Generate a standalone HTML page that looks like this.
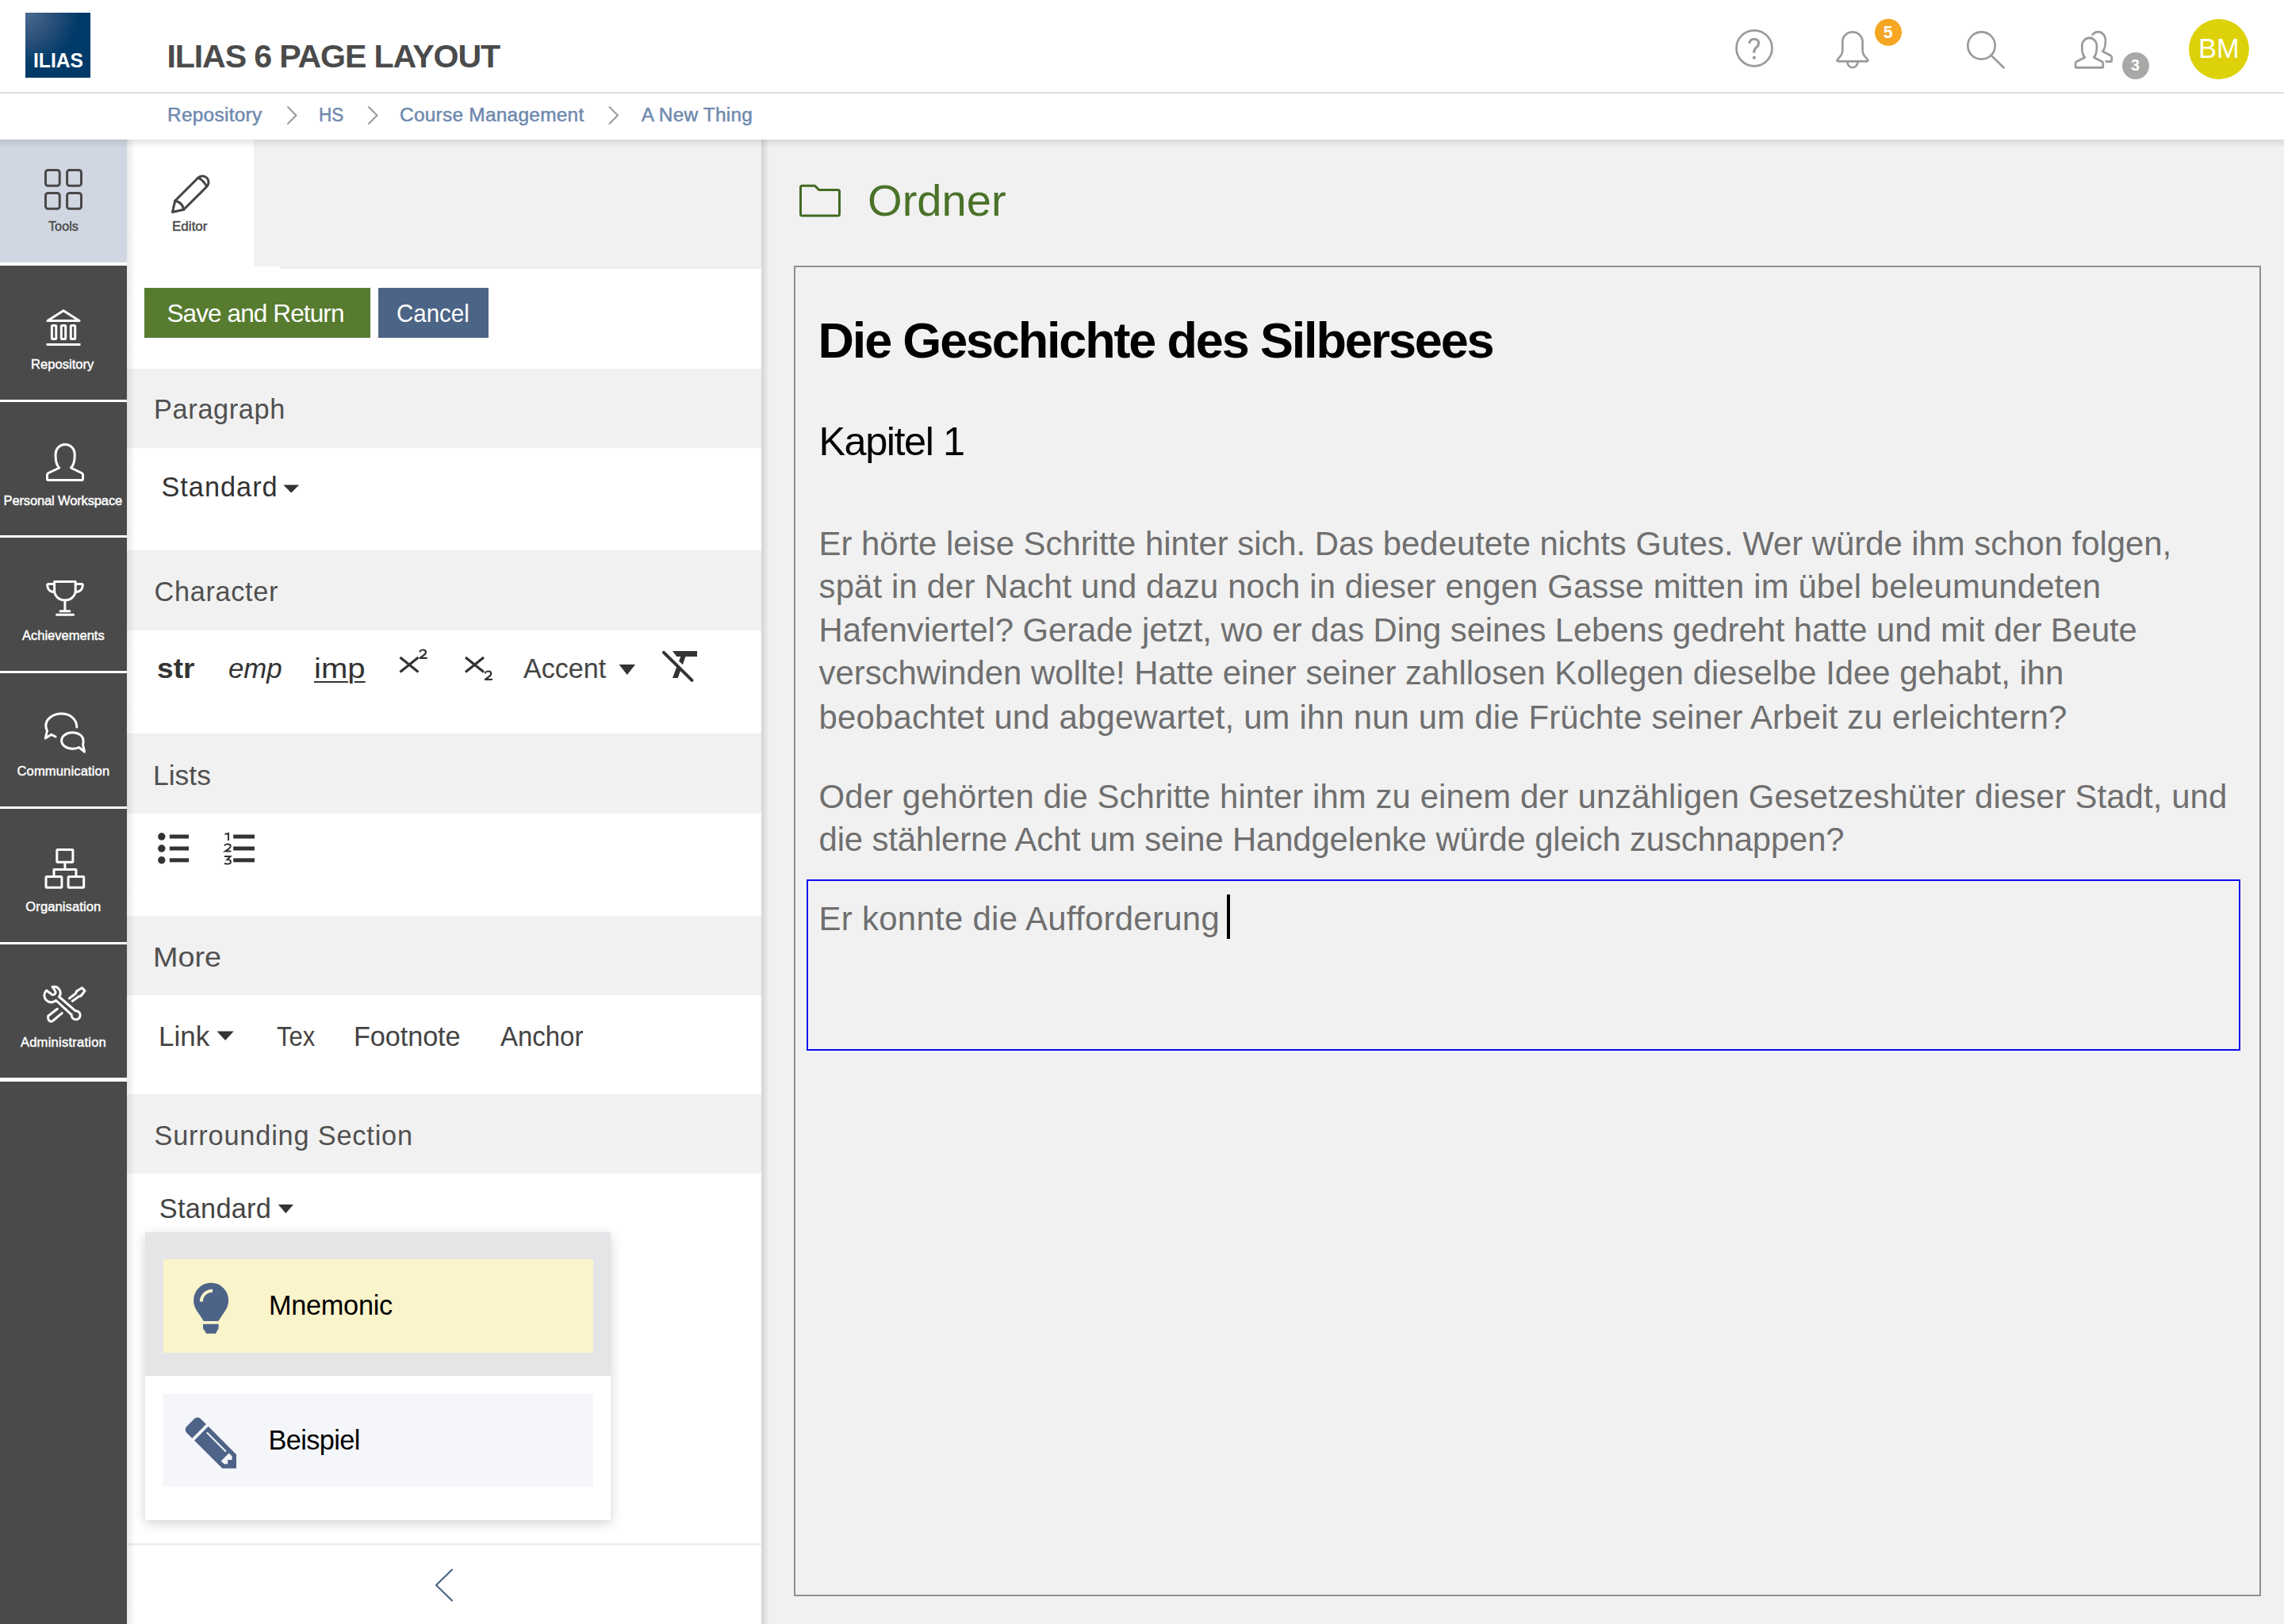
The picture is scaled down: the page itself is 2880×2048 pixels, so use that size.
<!DOCTYPE html>
<html><head><meta charset="utf-8"><title>ILIAS 6 Page Layout</title>
<style>
html,body{margin:0;padding:0;}
body{width:2880px;height:2048px;overflow:hidden;position:relative;background:#f1f1f1;font-family:"Liberation Sans",sans-serif;}
.a{position:absolute;}
.t{position:absolute;white-space:pre;font-family:"Liberation Sans",sans-serif;}
svg{position:absolute;overflow:visible;}
</style></head><body>
<!-- header -->
<div class="a" style="left:0;top:0;width:2880px;height:116px;background:#fff;z-index:2"></div>
<div class="a" style="left:0;top:116px;width:2880px;height:2px;background:#dcdcdc;z-index:2"></div>
<div class="a" style="left:0;top:118px;width:2880px;height:58px;background:#fff;z-index:2"></div>
<div class="a" style="left:0;top:176px;width:2880px;height:10px;background:linear-gradient(rgba(0,0,0,0.10),rgba(0,0,0,0));z-index:4"></div>
<!-- logo -->
<div class="a" style="left:32px;top:16px;width:82px;height:82px;background:radial-gradient(ellipse 90px 90px at 0 0,#4b6b8f 0%,#2a5079 40%,#003a69 75%);z-index:3"></div>

<!-- sidebar -->
<div class="a" style="left:0;top:176px;width:160px;height:1872px;background:#4a4a4a;z-index:3"></div>
<div class="a" style="left:0;top:176px;width:160px;height:155px;background:#d1d7e2;z-index:3"></div>
<div class="a" style="left:0;top:331px;width:160px;height:4px;background:#fff;z-index:3"></div>
<div class="a" style="left:0;top:504px;width:160px;height:3px;background:#fff;z-index:3"></div>
<div class="a" style="left:0;top:675px;width:160px;height:3px;background:#fff;z-index:3"></div>
<div class="a" style="left:0;top:846px;width:160px;height:3px;background:#fff;z-index:3"></div>
<div class="a" style="left:0;top:1017px;width:160px;height:3px;background:#fff;z-index:3"></div>
<div class="a" style="left:0;top:1188px;width:160px;height:3px;background:#fff;z-index:3"></div>
<div class="a" style="left:0;top:1359px;width:160px;height:5px;background:#fff;z-index:3"></div>

<!-- panel -->
<div class="a" style="left:160px;top:176px;width:800px;height:1872px;background:#fff;z-index:1"></div>
<div class="a" style="left:320px;top:176px;width:640px;height:160px;background:#f1f1f1;z-index:1"></div>
<div class="a" style="left:353px;top:336px;width:607px;height:2.6px;background:#ededed;z-index:1"></div>
<div class="a" style="left:160px;top:465px;width:800px;height:100px;background:#f1f1f1;z-index:1"></div>
<div class="a" style="left:160px;top:694px;width:800px;height:101px;background:#f1f1f1;z-index:1"></div>
<div class="a" style="left:160px;top:925px;width:800px;height:101px;background:#f1f1f1;z-index:1"></div>
<div class="a" style="left:160px;top:1155px;width:800px;height:100px;background:#f1f1f1;z-index:1"></div>
<div class="a" style="left:160px;top:1380px;width:800px;height:100px;background:#f1f1f1;z-index:1"></div>
<div class="a" style="left:160px;top:1946px;width:800px;height:3px;background:#efefef;z-index:1"></div>
<div class="a" style="left:160px;top:176px;width:10px;height:1872px;background:linear-gradient(90deg,rgba(0,0,0,0.09),rgba(0,0,0,0));z-index:2"></div>
<!-- buttons -->
<div class="a" style="left:182px;top:363px;width:285px;height:63px;background:#577c30;z-index:2"></div>
<div class="a" style="left:477px;top:363px;width:139px;height:63px;background:#4c6586;z-index:2"></div>

<!-- main -->
<div class="a" style="left:960px;top:176px;width:1920px;height:1872px;background:#f1f1f1;z-index:1"></div>
<div class="a" style="left:960px;top:176px;width:10px;height:1872px;background:linear-gradient(90deg,rgba(0,0,0,0.12),rgba(0,0,0,0));z-index:2"></div>
<div class="a" style="left:1001px;top:335px;width:1846px;height:1674px;border:2px solid #8f8f8f;z-index:2"></div>
<div class="a" style="left:1017px;top:1109px;width:1804px;height:212px;border:2px solid #0a0af0;z-index:2"></div>
<div class="a" style="left:1547px;top:1128px;width:4px;height:56px;background:#000;z-index:3"></div>

<!-- dropdown -->
<div class="a" style="left:183px;top:1554px;width:587px;height:363px;background:#fff;box-shadow:0 4px 14px rgba(0,0,0,0.18);z-index:10"></div>
<div class="a" style="left:183px;top:1554px;width:587px;height:181px;background:#e4e5e7;z-index:10"></div>
<div class="a" style="left:206px;top:1588px;width:542px;height:118px;background:#faf4ca;z-index:11"></div>
<div class="a" style="left:206px;top:1758px;width:542px;height:117px;background:#f4f6f9;z-index:11"></div>

<div class="t" style="left:42.01px;top:63.93px;font-size:25.00px;line-height:25.00px;color:#fff;font-weight:700;font-style:normal;letter-spacing:0.000px;z-index:5;transform:scaleX(0.9869);transform-origin:0 0;">ILIAS</div>
<div class="t" style="left:210.50px;top:51.18px;font-size:41.13px;line-height:41.13px;color:#4b4b4b;font-weight:700;font-style:normal;letter-spacing:-1.134px;z-index:5;">ILIAS 6 PAGE LAYOUT</div>
<div class="t" style="left:211.00px;top:133.12px;font-size:24.42px;line-height:24.42px;color:#6f89ae;font-weight:400;font-style:normal;letter-spacing:0.283px;z-index:5;-webkit-text-stroke:0.5px currentColor;">Repository</div>
<div class="t" style="left:401.55px;top:133.12px;font-size:24.42px;line-height:24.42px;color:#6f89ae;font-weight:400;font-style:normal;letter-spacing:0.000px;z-index:5;transform:scaleX(0.9233);transform-origin:0 0;-webkit-text-stroke:0.5px currentColor;">HS</div>
<div class="t" style="left:504.00px;top:133.12px;font-size:24.42px;line-height:24.42px;color:#6f89ae;font-weight:400;font-style:normal;letter-spacing:0.267px;z-index:5;-webkit-text-stroke:0.5px currentColor;">Course Management</div>
<div class="t" style="left:808.70px;top:133.12px;font-size:24.42px;line-height:24.42px;color:#6f89ae;font-weight:400;font-style:normal;letter-spacing:0.216px;z-index:5;-webkit-text-stroke:0.5px currentColor;">A New Thing</div>
<div class="t" style="left:2772.03px;top:44.47px;font-size:34.88px;line-height:34.88px;color:#fff;font-weight:400;font-style:normal;letter-spacing:0.000px;z-index:8;transform:scaleX(0.9863);transform-origin:0 0;">BM</div>
<div class="t" style="left:2374.70px;top:30.61px;font-size:21.37px;line-height:21.37px;color:#fff;font-weight:700;font-style:normal;letter-spacing:0.000px;z-index:8;">5</div>
<div class="t" style="left:2687.00px;top:73.26px;font-size:19.77px;line-height:19.77px;color:#fff;font-weight:700;font-style:normal;letter-spacing:0.000px;z-index:8;">3</div>
<div class="t" style="left:61.00px;top:278.37px;font-size:16.57px;line-height:16.57px;color:#4a4a4a;font-weight:400;font-style:normal;letter-spacing:0.000px;z-index:5;transform:scaleX(0.9796);transform-origin:0 0;-webkit-text-stroke:0.45px currentColor;">Tools</div>
<div class="t" style="left:216.97px;top:278.37px;font-size:16.57px;line-height:16.57px;color:#4a4a4a;font-weight:400;font-style:normal;letter-spacing:0.000px;z-index:5;transform:scaleX(1.0292);transform-origin:0 0;-webkit-text-stroke:0.45px currentColor;">Editor</div>
<div class="t" style="left:39.00px;top:451.97px;font-size:16.57px;line-height:16.57px;color:#fff;font-weight:400;font-style:normal;letter-spacing:0.013px;z-index:5;-webkit-text-stroke:0.45px currentColor;">Repository</div>
<div class="t" style="left:4.50px;top:623.97px;font-size:16.57px;line-height:16.57px;color:#fff;font-weight:400;font-style:normal;letter-spacing:-0.164px;z-index:5;-webkit-text-stroke:0.45px currentColor;">Personal Workspace</div>
<div class="t" style="left:28.00px;top:793.97px;font-size:16.57px;line-height:16.57px;color:#fff;font-weight:400;font-style:normal;letter-spacing:-0.031px;z-index:5;-webkit-text-stroke:0.45px currentColor;">Achievements</div>
<div class="t" style="left:21.50px;top:964.97px;font-size:16.57px;line-height:16.57px;color:#fff;font-weight:400;font-style:normal;letter-spacing:0.129px;z-index:5;-webkit-text-stroke:0.45px currentColor;">Communication</div>
<div class="t" style="left:32.30px;top:1135.97px;font-size:16.57px;line-height:16.57px;color:#fff;font-weight:400;font-style:normal;letter-spacing:0.091px;z-index:5;-webkit-text-stroke:0.45px currentColor;">Organisation</div>
<div class="t" style="left:25.90px;top:1306.97px;font-size:16.57px;line-height:16.57px;color:#fff;font-weight:400;font-style:normal;letter-spacing:0.229px;z-index:5;-webkit-text-stroke:0.45px currentColor;">Administration</div>
<div class="t" style="left:210.50px;top:380.10px;font-size:31.54px;line-height:31.54px;color:#fff;font-weight:400;font-style:normal;letter-spacing:-0.907px;z-index:5;">Save and Return</div>
<div class="t" style="left:500.06px;top:380.10px;font-size:31.54px;line-height:31.54px;color:#fff;font-weight:400;font-style:normal;letter-spacing:0.000px;z-index:5;transform:scaleX(0.9354);transform-origin:0 0;">Cancel</div>
<div class="t" style="left:194.10px;top:498.86px;font-size:34.30px;line-height:34.30px;color:#505050;font-weight:400;font-style:normal;letter-spacing:0.639px;z-index:5;">Paragraph</div>
<div class="t" style="left:203.40px;top:596.76px;font-size:34.30px;line-height:34.30px;color:#333;font-weight:400;font-style:normal;letter-spacing:1.011px;z-index:5;">Standard</div>
<div class="t" style="left:194.50px;top:728.96px;font-size:34.30px;line-height:34.30px;color:#505050;font-weight:400;font-style:normal;letter-spacing:0.667px;z-index:5;">Character</div>
<div class="t" style="left:197.92px;top:825.96px;font-size:34.30px;line-height:34.30px;color:#333;font-weight:700;font-style:normal;letter-spacing:0.000px;z-index:5;transform:scaleX(1.0825);transform-origin:0 0;">str</div>
<div class="t" style="left:288.39px;top:825.96px;font-size:34.30px;line-height:34.30px;color:#333;font-weight:400;font-style:italic;letter-spacing:0.000px;z-index:5;transform:scaleX(1.0148);transform-origin:0 0;">emp</div>
<div class="t" style="left:396.36px;top:825.96px;font-size:34.30px;line-height:34.30px;color:#333;font-weight:400;font-style:normal;letter-spacing:0.000px;z-index:5;transform:scaleX(1.1688);transform-origin:0 0;text-decoration:underline;text-decoration-thickness:2px;text-underline-offset:4px;">imp</div>
<div class="t" style="left:660.00px;top:825.96px;font-size:34.30px;line-height:34.30px;color:#444;font-weight:400;font-style:normal;letter-spacing:0.000px;z-index:5;transform:scaleX(0.9932);transform-origin:0 0;">Accent</div>
<div class="t" style="left:193.43px;top:960.66px;font-size:34.30px;line-height:34.30px;color:#505050;font-weight:400;font-style:normal;letter-spacing:0.000px;z-index:5;transform:scaleX(1.0331);transform-origin:0 0;">Lists</div>
<div class="t" style="left:193.30px;top:1189.96px;font-size:34.30px;line-height:34.30px;color:#505050;font-weight:400;font-style:normal;letter-spacing:0.000px;z-index:5;transform:scaleX(1.1017);transform-origin:0 0;">More</div>
<div class="t" style="left:200.46px;top:1289.96px;font-size:34.30px;line-height:34.30px;color:#444;font-weight:400;font-style:normal;letter-spacing:0.000px;z-index:5;transform:scaleX(1.0199);transform-origin:0 0;">Link</div>
<div class="t" style="left:349.00px;top:1289.96px;font-size:34.30px;line-height:34.30px;color:#444;font-weight:400;font-style:normal;letter-spacing:0.000px;z-index:5;transform:scaleX(0.9019);transform-origin:0 0;">Tex</div>
<div class="t" style="left:446.00px;top:1289.96px;font-size:34.30px;line-height:34.30px;color:#444;font-weight:400;font-style:normal;letter-spacing:-0.115px;z-index:5;">Footnote</div>
<div class="t" style="left:631.00px;top:1289.96px;font-size:34.30px;line-height:34.30px;color:#444;font-weight:400;font-style:normal;letter-spacing:0.000px;z-index:5;transform:scaleX(0.9608);transform-origin:0 0;">Anchor</div>
<div class="t" style="left:194.50px;top:1414.76px;font-size:34.30px;line-height:34.30px;color:#505050;font-weight:400;font-style:normal;letter-spacing:0.822px;z-index:5;">Surrounding Section</div>
<div class="t" style="left:200.80px;top:1506.56px;font-size:34.30px;line-height:34.30px;color:#444;font-weight:400;font-style:normal;letter-spacing:0.268px;z-index:5;">Standard</div>
<div class="t" style="left:338.90px;top:1629.36px;font-size:34.30px;line-height:34.30px;color:#000;font-weight:400;font-style:normal;letter-spacing:-0.265px;z-index:12;">Mnemonic</div>
<div class="t" style="left:338.50px;top:1798.56px;font-size:34.30px;line-height:34.30px;color:#000;font-weight:400;font-style:normal;letter-spacing:-0.612px;z-index:12;">Beispiel</div>
<div class="t" style="left:1093.99px;top:225.22px;font-size:55.96px;line-height:55.96px;color:#4a7229;font-weight:400;font-style:normal;letter-spacing:0.000px;z-index:5;transform:scaleX(1.0029);transform-origin:0 0;">Ordner</div>
<div class="t" style="left:1031.50px;top:398.01px;font-size:62.94px;line-height:62.94px;color:#000;font-weight:700;font-style:normal;letter-spacing:-2.145px;z-index:5;">Die Geschichte des Silbersees</div>
<div class="t" style="left:1032.40px;top:532.39px;font-size:50.44px;line-height:50.44px;color:#000;font-weight:400;font-style:normal;letter-spacing:-1.454px;z-index:5;">Kapitel 1</div>
<div class="t" style="left:1032.60px;top:664.56px;font-size:41.86px;line-height:41.86px;color:#6f6f6f;font-weight:400;font-style:normal;letter-spacing:-0.016px;z-index:5;">Er hörte leise Schritte hinter sich. Das bedeutete nichts Gutes. Wer würde ihm schon folgen,</div>
<div class="t" style="left:1032.60px;top:718.86px;font-size:41.86px;line-height:41.86px;color:#6f6f6f;font-weight:400;font-style:normal;letter-spacing:0.134px;z-index:5;">spät in der Nacht und dazu noch in dieser engen Gasse mitten im übel beleumundeten</div>
<div class="t" style="left:1032.60px;top:773.96px;font-size:41.86px;line-height:41.86px;color:#6f6f6f;font-weight:400;font-style:normal;letter-spacing:-0.097px;z-index:5;">Hafenviertel? Gerade jetzt, wo er das Ding seines Lebens gedreht hatte und mit der Beute</div>
<div class="t" style="left:1032.60px;top:828.36px;font-size:41.86px;line-height:41.86px;color:#6f6f6f;font-weight:400;font-style:normal;letter-spacing:-0.013px;z-index:5;">verschwinden wollte! Hatte einer seiner zahllosen Kollegen dieselbe Idee gehabt, ihn</div>
<div class="t" style="left:1032.60px;top:883.56px;font-size:41.86px;line-height:41.86px;color:#6f6f6f;font-weight:400;font-style:normal;letter-spacing:0.182px;z-index:5;">beobachtet und abgewartet, um ihn nun um die Früchte seiner Arbeit zu erleichtern?</div>
<div class="t" style="left:1032.60px;top:983.56px;font-size:41.86px;line-height:41.86px;color:#6f6f6f;font-weight:400;font-style:normal;letter-spacing:0.104px;z-index:5;">Oder gehörten die Schritte hinter ihm zu einem der unzähligen Gesetzeshüter dieser Stadt, und</div>
<div class="t" style="left:1032.60px;top:1037.96px;font-size:41.86px;line-height:41.86px;color:#6f6f6f;font-weight:400;font-style:normal;letter-spacing:-0.159px;z-index:5;">die stählerne Acht um seine Handgelenke würde gleich zuschnappen?</div>
<div class="t" style="left:1032.60px;top:1137.56px;font-size:41.86px;line-height:41.86px;color:#6f6f6f;font-weight:400;font-style:normal;letter-spacing:0.313px;z-index:5;">Er konnte die Aufforderung</div>
<!-- ICONS -->
<svg style="left:0;top:0;z-index:6" width="2880" height="2048" viewBox="0 0 2880 2048" fill="none" stroke-linecap="round" stroke-linejoin="round">
 <!-- breadcrumb chevrons -->
 <g stroke="#9a9a9a" stroke-width="2">
  <path d="M363,135 L373.5,145.5 L363,156"/>
  <path d="M465,135 L475.5,145.5 L465,156"/>
  <path d="M768.5,135 L779,145.5 L768.5,156"/>
 </g>
 <!-- header icons -->
 <g stroke="#9b9b9b" stroke-width="2.7">
  <circle cx="2212" cy="60.8" r="22.5"/>
  <path d="M2206.1,54.8 C2206.1,51.2 2208.5,49.2 2211.8,49.2 C2215.3,49.2 2217.6,51.5 2217.6,54.5 C2217.6,57.3 2215.8,58.8 2214,60.5 C2212.2,62.2 2211.7,63.5 2211.7,66.8" stroke-width="3.1" stroke-linecap="butt"/>
  <path d="M2323.3,53 V64 C2323.3,67 2322.5,68.5 2320.9,70.5 L2317,75.3 Q2315.6,77.3 2318.3,77.3 H2353.6 Q2356.3,77.3 2355,75.3 L2351,70.5 C2349.4,68.5 2348.6,67 2348.6,64 V53 A12.65,12.65 0 0 0 2323.3,53 Z"/>
  <path d="M2329.4,78.3 A6.55,6.8 0 0 0 2342.5,78.3"/>
  <circle cx="2498.5" cy="57.5" r="17.2"/>
  <path d="M2510.7,69.7 L2526.5,85.3"/>
 </g>
 <rect x="2210" y="71" width="3.8" height="3.5" fill="#9b9b9b"/>
 <circle cx="2381" cy="40.8" r="17" fill="#f5a623"/>
 <!-- people: back then front -->
 <g transform="translate(2627,39) scale(0.77,0.83)" stroke="#9b9b9b" stroke-width="3.4">
  <path d="M16.8,31 C12.5,27 12.1,22 12.1,16 L12.1,13.5 A12.05,12.05 0 0 1 36.2,13.5 L36.2,16 C36.2,22 35.5,27 31.5,31 L45,37.5 Q46.5,38.3 46.5,40 V45 Q46.5,46.5 45,46.5 H3 Q1.5,46.5 1.5,45 V40 Q1.5,38.3 3,37.5 Z"/>
 </g>
 <g transform="translate(2616,46.6) scale(0.77,0.83)">
  <path d="M16.8,31 C12.5,27 12.1,22 12.1,16 L12.1,13.5 A12.05,12.05 0 0 1 36.2,13.5 L36.2,16 C36.2,22 35.5,27 31.5,31 L45,37.5 Q46.5,38.3 46.5,40 V45 Q46.5,46.5 45,46.5 H3 Q1.5,46.5 1.5,45 V40 Q1.5,38.3 3,37.5 Z" fill="#fff" stroke="#fff" stroke-width="9"/>
  <path d="M16.8,31 C12.5,27 12.1,22 12.1,16 L12.1,13.5 A12.05,12.05 0 0 1 36.2,13.5 L36.2,16 C36.2,22 35.5,27 31.5,31 L45,37.5 Q46.5,38.3 46.5,40 V45 Q46.5,46.5 45,46.5 H3 Q1.5,46.5 1.5,45 V40 Q1.5,38.3 3,37.5 Z" stroke="#9b9b9b" stroke-width="3.5"/>
 </g>
 <circle cx="2693" cy="83" r="17" fill="#a8a8a8"/>
 <circle cx="2798" cy="62" r="38" fill="#ddd20a"/>

 <!-- sidebar icons -->
 <g stroke="#484848" stroke-width="3">
  <rect x="57.5" y="214.5" width="17.7" height="19.7" rx="3"/>
  <rect x="84.6" y="214.5" width="17.9" height="19.7" rx="3"/>
  <rect x="57.5" y="243.5" width="17.7" height="19.8" rx="3"/>
  <rect x="84.6" y="243.5" width="17.9" height="19.8" rx="3"/>
 </g>
 <g stroke="#fff" stroke-width="3">
  <path d="M60,404.5 L80,391.8 L100,404.5 Z"/>
  <rect x="65.4" y="410.4" width="5.4" height="17.1" rx="1"/>
  <rect x="77.3" y="410.4" width="5.4" height="17.1" rx="1"/>
  <rect x="89.3" y="410.4" width="5.4" height="17.1" rx="1"/>
  <path d="M58.5,434.4 H101.5" stroke-linecap="butt"/>
  <g transform="translate(58,559)"><path d="M16.8,31 C12.5,27 12.1,22 12.1,16 L12.1,13.5 A12.05,12.05 0 0 1 36.2,13.5 L36.2,16 C36.2,22 35.5,27 31.5,31 L45,37.5 Q46.5,38.3 46.5,40 V45 Q46.5,46.5 45,46.5 H3 Q1.5,46.5 1.5,45 V40 Q1.5,38.3 3,37.5 Z"/></g>
  <path d="M68.6,733.5 H95.2 V744.6 C95.2,752 89,757 81.9,757 C74.8,757 68.6,752 68.6,744.6 Z"/>
  <path d="M68.6,736.4 H61.2 Q59.7,736.4 59.7,738 C59.7,743 63,746.5 68.6,746.5"/>
  <path d="M95.2,736.4 H102.8 Q104.3,736.4 104.3,738 C104.3,743 101,746.5 95.2,746.5"/>
  <path d="M81.9,757 V770.7 M76,770.7 H87.8 M71.5,775.3 H92.5"/>
  <path d="M96.8,917 C96.8,906.5 88,900 77.5,900 C66.5,900 57.8,907 57.8,915 C57.8,917.5 58.5,919.5 59.5,921.5 L57.3,931 L64.8,926.3 L70,929"/>
  <path d="M104.6,939.2 C105.1,937.5 105,936 105,934 C105,928 98.8,923.8 91.3,923.8 C83.8,923.8 77.6,928.3 77.6,934 C77.6,939.8 84,944.2 91.3,944.2 C94.5,944.2 97.5,943.5 99.6,942.5 L106.5,948 Z"/>
  <rect x="71.8" y="1071.5" width="20.1" height="15.7" rx="1"/>
  <path d="M81.9,1087.2 V1096.6 M68,1104.3 V1096.6 H95.9 V1104.3"/>
  <rect x="58" y="1105.5" width="19.9" height="13.8" rx="1"/>
  <rect x="86.1" y="1105.5" width="19.6" height="13.8" rx="1"/>
  <path d="M74.5,1257 A8,8 0 0 0 66,1244.5 L69.5,1249.5 A3,3 0 0 1 64,1253 L58.5,1249 A8.5,8.5 0 0 0 70.5,1261.5 L90.2,1279.7 A5.5,5.5 0 1 0 95.2,1274.8 Z"/>
  <path d="M87.5,1259 L95.7,1252.6 L96.5,1250 L103.5,1245.7 L107,1249.5 L102,1256 L99.6,1256.5 L91.2,1262.4"/>
  <path d="M72.3,1272.3 L60.7,1281.2 Q60,1286.5 63.2,1288 Q65.5,1288.5 67.1,1287 L78.2,1277.7"/>
 </g>
 <!-- editor pencil -->
 <g transform="translate(217.5,267.5) rotate(-45)" stroke="#444" stroke-width="3">
  <path d="M0,0 L12.4,-7.8 L53.4,-7.8 A7.8,7.8 0 0 1 53.4,7.8 L12.4,7.8 Z"/>
  <path d="M12.4,-7.8 Q17.5,0 12.4,7.8 M53.4,-7.8 Q56.2,0 53.4,7.8"/>
 </g>
 <!-- folder -->
 <path d="M1009.5,270 V236.3 Q1009.5,234.3 1011.5,234.3 H1027.5 L1032.5,239.4 H1056.5 Q1058.5,239.4 1058.5,241.4 V270 Q1058.5,272 1056.5,272 H1011.5 Q1009.5,272 1009.5,270 Z" stroke="#436b24" stroke-width="3"/>
 <!-- character icons -->
 <g stroke="#333" stroke-width="3.2" stroke-linecap="butt">
  <path d="M504.5,829 L527.5,847.5 M527.5,829 L504.5,847.5"/>
  <path d="M587,829 L610,847.5 M610,829 L587,847.5"/>
 </g>
 <g stroke="#333" stroke-width="2.2">
  <path d="M529.5,821.5 Q530.5,819.5 533.3,819.5 Q537,819.5 537,822.5 Q537,824.5 533.5,826.8 L529.5,829.8 H537.8"/>
  <path d="M611.8,848.5 Q612.8,846.5 615.6,846.5 Q619.3,846.5 619.3,849.5 Q619.3,851.5 615.8,853.8 L611.8,856.8 H620.1"/>
 </g>
 <path d="M780.6,838 H801 L790.8,851 Z" fill="#333"/>
 <path d="M357.3,611.5 H377.2 L367.25,621.5 Z" fill="#333"/>
 <path d="M273.5,1300.5 H294.7 L284.1,1312 Z" fill="#333"/>
 <path d="M350.8,1519 H370 L360.4,1530 Z" fill="#333"/>
 <path d="M848,821 H879 V828 H864.5 L854.7,855 H848 L858.3,828 H853.3 Z" fill="#333"/>
 <path d="M842,824 L872,852" stroke="#fff" stroke-width="5"/>
 <path d="M837,822.8 L872.5,857.8" stroke="#333" stroke-width="4"/>
 <!-- lists -->
 <g fill="#333">
  <circle cx="203.8" cy="1055" r="4.7"/><circle cx="203.8" cy="1070" r="4.7"/><circle cx="203.8" cy="1084.8" r="4.7"/>
  <rect x="213.9" y="1052.5" width="24.2" height="5"/><rect x="213.9" y="1067.5" width="24.2" height="5"/><rect x="213.9" y="1082.3" width="24.2" height="5"/>
  <rect x="294.2" y="1052.5" width="26.8" height="5"/><rect x="294.2" y="1067.5" width="26.8" height="5"/><rect x="294.2" y="1082.3" width="26.8" height="5"/>
 </g>
 <g stroke="#333" stroke-width="2" stroke-linecap="butt" stroke-linejoin="miter">
  <path d="M283.5,1052 L288,1051 V1060"/>
  <path d="M283,1066.5 Q284,1064.5 287,1064.5 Q290.8,1064.5 290.8,1067.2 Q290.8,1069 284,1073.5 H291.5"/>
  <path d="M283,1080 H290.5 L286.5,1084 Q291,1084 291,1087 Q291,1089.5 286.5,1089.5 Q284,1089.5 283,1088.5"/>
 </g>
 <!-- bottom chevron -->
 <path d="M570,1979.5 L550,1999 L570,2018.5" stroke="#4e6587" stroke-width="2.2"/>
</svg>
<svg style="left:0;top:0;z-index:13" width="2880" height="2048" viewBox="0 0 2880 2048">
 <path d="M266.1,1617.7 A22,22 0 0 1 288.1,1639.7 C288.1,1648 284,1653 280.5,1658 L275.4,1666 H256.8 L251.7,1658 C248.2,1653 244.1,1648 244.1,1639.7 A22,22 0 0 1 266.1,1617.7 Z" fill="#4d6387"/>
 <path d="M256,1669.8 H275.6 V1675 L272,1681.7 H260.2 L256,1675 Z" fill="#4d6387"/>
 <path d="M253.8,1641.6 A14,14 0 0 1 268,1627.7" stroke="#faf4ca" stroke-width="4" fill="none"/>
 <g transform="translate(298,1787.5) scale(-0.04244,0.04244) translate(0,-149)">
  <path fill="#4d6387" fill-rule="evenodd" d="M363 1536l91-91-235-235-91 91v107h128v128h107zm523-928q0-22-22-22-10 0-17 7l-542 542q-7 7-7 17 0 22 22 22 10 0 17-7l542-542q7-7 7-17zm-54-192l416 416-832 832h-416v-416zm683 96q0 53-37 90l-166 166-416-416 166-165q36-38 90-38 53 0 91 38l235 234q37 39 37 91z"/>
 </g>
</svg>
<script>(function(){var w=window.innerWidth;if(w&&Math.abs(w-2880)>2){document.documentElement.style.zoom=(w/2880);}})();</script>
</body></html>
